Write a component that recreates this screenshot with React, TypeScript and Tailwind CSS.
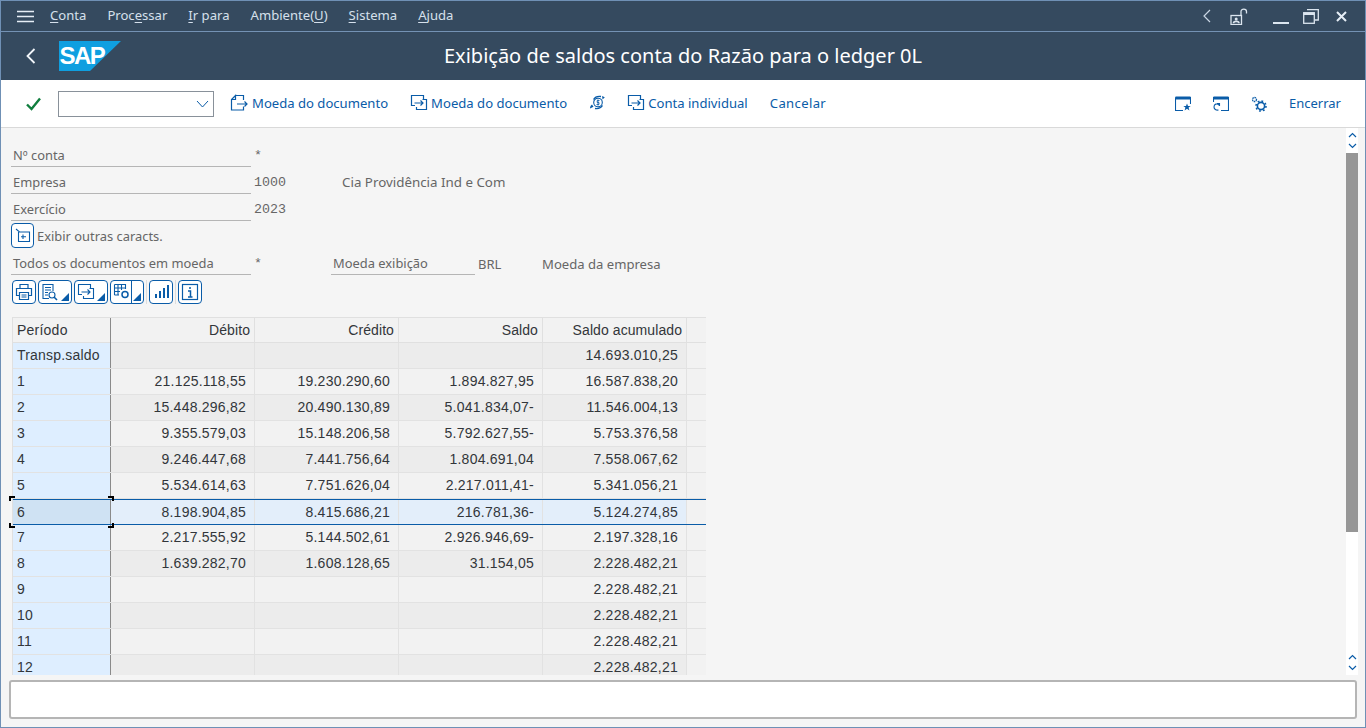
import React from "react";

const UI = "font-['Noto_Sans',sans-serif]";
const Blue = "#0a5ca8";

function Ico({ children, w = 18, h = 18, color = Blue, sw = 1.2 }: { children: React.ReactNode; w?: number; h?: number; color?: string; sw?: number }) {
  return (
    <svg width={w} height={h} viewBox={`0 0 ${w} ${h}`} fill="none" stroke={color} strokeWidth={sw} className="shrink-0">
      {children}
    </svg>
  );
}

function Menu({ pre, u, post }: { pre?: string; u: string; post?: string }) {
  return (
    <span className="text-[13.1px] text-[#d5e0ec] whitespace-nowrap">
      {pre}
      <span className="underline underline-offset-2">{u}</span>
      {post}
    </span>
  );
}

function ToolBtn({ icon, label, tight, cls }: { icon?: React.ReactNode; label?: string; tight?: boolean; cls?: string }) {
  return (
    <div className={`flex items-center ${tight ? "gap-[3px]" : "gap-[4px]"} text-[13.1px] text-[#0a5ca8] whitespace-nowrap`}>
      {icon}
      {label && <span className={`pt-[1px] ${cls ?? ""}`}>{label}</span>}
    </div>
  );
}

const ExportIcon = (
  <Ico w={18} h={18}>
    <path d="M5 11.5H1.5V1.5H13.5V5" />
    <path d="M6.5 13V15.5H16.5V5.5H12.5" />
    <path d="M4.5 9H13M10.5 6.5L13 9L10.5 11.5" />
  </Ico>
);
const DocIcon = (
  <Ico w={18} h={18}>
    <path d="M5.5 1.5H13.5V6M13.5 12.5V16H1.5V5.5L5.5 1.5V5.5H1.5" />
    <path d="M7 10H17M14.5 7.5L17 10L14.5 12.5" />
  </Ico>
);

function Field({ label, value, extra }: { label: string; value?: string; extra?: React.ReactNode }) {
  return (
    <div className="flex h-[27px] items-center">
      <div className="h-[27px] w-[240px] shrink-0 border-b border-[#b5b5b5] pl-[2px] pt-[6px] text-[12.9px] leading-[18px] text-[#666666] whitespace-nowrap">{label}</div>
      <div className="w-[91px] shrink-0 pl-[3px] pt-[5px] font-['Liberation_Mono',monospace] text-[13.33px] text-[#666666]">{value}</div>
      {extra}
    </div>
  );
}

function SmallBtn({ children, wide, split }: { children: React.ReactNode; wide?: boolean; split?: boolean }) {
  return (
    <div className={`${wide ? "w-[34px]" : "w-[24px]"} relative flex h-[24px] shrink-0 items-center justify-start rounded-[4px] border border-[#0a5ca8] bg-white pl-[2px]`}>
      {children}
      {split && <div className="absolute right-[11px] top-0 h-[22px] w-px bg-[#0a5ca8]" />}
      {wide && <div className="absolute bottom-[2px] right-[2px] h-0 w-0 border-b-[8px] border-l-[8px] border-b-[#0a5ca8] border-l-transparent" />}
    </div>
  );
}

const rows: [string, string, string, string, string][] = [
  ["Transp.saldo", "", "", "", "14.693.010,25"],
  ["1", "21.125.118,55", "19.230.290,60", "1.894.827,95", "16.587.838,20"],
  ["2", "15.448.296,82", "20.490.130,89", "5.041.834,07-", "11.546.004,13"],
  ["3", "9.355.579,03", "15.148.206,58", "5.792.627,55-", "5.753.376,58"],
  ["4", "9.246.447,68", "7.441.756,64", "1.804.691,04", "7.558.067,62"],
  ["5", "5.534.614,63", "7.751.626,04", "2.217.011,41-", "5.341.056,21"],
  ["6", "8.198.904,85", "8.415.686,21", "216.781,36-", "5.124.274,85"],
  ["7", "2.217.555,92", "5.144.502,61", "2.926.946,69-", "2.197.328,16"],
  ["8", "1.639.282,70", "1.608.128,65", "31.154,05", "2.228.482,21"],
  ["9", "", "", "", "2.228.482,21"],
  ["10", "", "", "", "2.228.482,21"],
  ["11", "", "", "", "2.228.482,21"],
  ["12", "", "", "", "2.228.482,21"],
];

function Corner({ cls }: { cls: string }) {
  return <div className={`absolute h-[5px] w-[6px] border-black ${cls}`} />;
}

function Table() {
  const cell = "w-[144px] shrink-0 border-r border-[#e2e2e2] pr-[8px] text-right tracking-[0.23px]";
  const cellH = "w-[144px] shrink-0 border-r border-[#e0e0e0] pr-[4px] text-right tracking-[0.08px]";
  return (
    <div className="ml-[1px] w-[694px] border-l border-t border-[#e0e0e0] font-['Liberation_Sans',sans-serif] text-[14px] text-[#32363a]">
      <div className="flex h-[25px] items-center border-b border-[#e0e0e0] bg-[#f2f2f2] leading-[25px]">
        <div className="w-[98px] shrink-0 border-r border-[#8a8a8a] pl-[4px] tracking-[0.23px]">Período</div>
        <div className={cellH}>Débito</div>
        <div className={cellH}>Crédito</div>
        <div className={cellH}>Saldo</div>
        <div className={cellH}>Saldo acumulado</div>
        <div className="flex-1" />
      </div>
      {rows.map((r, i) => {
        const sel = i === 6;
        const bg = sel ? "bg-[#e3eefa]" : i % 2 === 0 ? "bg-[#ececec]" : "bg-[#f2f2f2]";
        return (
          <div
            key={r[0]}
            className={`flex h-[26px] ${bg} ${sel ? "relative z-10 border-y border-[#0a5ca8] leading-[24px]" : "border-b border-[#e2e2e2] leading-[25px]"}`}
          >
            <div className={`relative w-[98px] shrink-0 border-r border-[#8a8a8a] pl-[4px] tracking-[0.2px] ${sel ? "bg-[#cfe2f3]" : "bg-[#deeeff]"}`}>
              {r[0]}
              {sel && (
                <>
                  <Corner cls="-left-[4px] -top-[4px] border-l-2 border-t-2" />
                  <Corner cls="-right-[4px] -top-[4px] border-r-2 border-t-2" />
                  <Corner cls="-bottom-[4px] -left-[4px] border-b-2 border-l-2" />
                  <Corner cls="-bottom-[4px] -right-[4px] border-b-2 border-r-2" />
                </>
              )}
            </div>
            <div className={cell}>{r[1]}</div>
            <div className={cell}>{r[2]}</div>
            <div className={cell}>{r[3]}</div>
            <div className={cell}>{r[4]}</div>
            <div className="flex-1 bg-[#f2f2f2]" />
          </div>
        );
      })}
    </div>
  );
}

export default function App() {
  return (
    <div className={`${UI} flex h-[728px] w-[1366px] flex-col overflow-hidden border border-[#6f90b5] bg-[#f5f5f5]`}>
      {/* Menu bar */}
      <div className="flex h-[31px] shrink-0 items-center border-b border-[#7492b4] bg-[#354a5f] pl-[16px] pr-[18px]">
        <svg width="17" height="13" viewBox="0 0 17 13" className="mr-[16px] shrink-0" stroke="#e6eef6" strokeWidth="1.6">
          <path d="M0 1.5H17M0 6.5H17M0 11.5H17" />
        </svg>
        <div className="flex items-center gap-[21px]">
          <Menu u="C" post="onta" />
          <Menu pre="Proc" u="e" post="ssar" />
          <Menu u="I" post="r para" />
          <span className="text-[13.1px] text-[#d5e0ec] whitespace-nowrap">
            Ambiente(<span className="underline underline-offset-2">U</span>)
          </span>
          <Menu u="S" post="istema" />
          <Menu u="A" post="juda" />
        </div>
        <div className="ml-auto flex items-center">
          <svg width="9" height="14" viewBox="0 0 9 14" fill="none" stroke="#c9d6e4" strokeWidth="1.2" className="mr-[19px]">
            <path d="M8 1L2 7L8 13" />
          </svg>
          <svg width="18" height="17" viewBox="0 0 18 17" fill="none" stroke="#dbe5ef" strokeWidth="1.3" className="mr-[25px]">
            <path d="M11 8V3.5C11 0.4 16.5 0.4 16.5 3.5V5.5" />
            <rect x="1" y="7.5" width="10.5" height="9" />
            <circle cx="6.2" cy="11" r="1.5" fill="#dbe5ef" stroke="none" />
            <path d="M3.5 15.2C3.5 12.8 9 12.8 9 15.2" strokeWidth="1.6" />
          </svg>
          <div className="mr-[14px] mt-[13px] h-[2px] w-[16px] bg-[#dbe5ef]" />
          <svg width="16" height="16" viewBox="0 0 16 16" fill="none" stroke="#dbe5ef" strokeWidth="1.3" className="mr-[17px]">
            <rect x="0.7" y="4.7" width="10.6" height="10.6" />
            <path d="M0.7 6H11.3" strokeWidth="2" />
            <path d="M4 1.7H15.3V12H12" />
          </svg>
          <svg width="11" height="11" viewBox="0 0 11 11" fill="none" stroke="#e6eef6" strokeWidth="2">
            <path d="M1 1L10 10M10 1L1 10" />
          </svg>
        </div>
      </div>

      {/* Title bar */}
      <div className="flex h-[48px] shrink-0 items-center bg-[#354a5f] pl-[25px]">
        <svg width="10" height="16" viewBox="0 0 10 16" fill="none" stroke="#f2f6fa" strokeWidth="1.8" className="shrink-0">
          <path d="M8.5 1L1.5 8L8.5 15" />
        </svg>
        <svg width="62" height="30" viewBox="0 0 62 30" className="ml-[23px] shrink-0">
          <path d="M0 0H62L31 30H0Z" fill="#0f9fe0" />
          <text x="0.5" y="23" fontFamily="Liberation Sans, sans-serif" fontWeight="700" fontSize="24" fill="#ffffff" letterSpacing="-1.6">SAP</text>
        </svg>
        <div className="flex-1 pr-[120px] text-center text-[20px] text-white whitespace-nowrap">
          Exibição de saldos conta do Razão para o ledger 0L
        </div>
      </div>

      {/* Toolbar */}
      <div className="flex h-[48px] shrink-0 items-center border-b border-[#d9d9d9] bg-white pl-[25px] pr-[24px]">
        <svg width="15" height="14" viewBox="0 0 15 14" fill="none" stroke="#107e3e" strokeWidth="2.4" className="shrink-0">
          <path d="M1 7.5L5.5 12L14 1.5" />
        </svg>
        <div className="ml-[17px] flex h-[26px] w-[156px] shrink-0 items-center justify-end border border-[#89919a] pr-[4px]">
          <svg width="13" height="8" viewBox="0 0 13 8" fill="none" stroke="#0a5ca8" strokeWidth="1">
            <path d="M1 1L6.5 7L12 1" />
          </svg>
        </div>
        <div className="ml-[16px] flex items-center">
          <ToolBtn icon={DocIcon} label="Moeda do documento" />
          <div className="w-[22px]" />
          <ToolBtn icon={ExportIcon} label="Moeda do documento" tight />
          <div className="w-[22px]" />
          <svg width="17" height="16" viewBox="0 0 17 16" fill="none" stroke={Blue} strokeWidth="1.1" className="shrink-0">
            <circle cx="9" cy="7.5" r="4.3" />
            <path d="M4.5 4.5C6 2 9 1 12 1.5" strokeWidth="1.3" />
            <path d="M13.5 10.5C12 13 9 14 6 13.5" strokeWidth="1.3" />
            <path d="M13 1L15.8 2.2L13.6 4.6Z" fill={Blue} stroke="none" />
            <path d="M1 13.5C1 11.8 1.8 10.2 3 9.5L4.5 11.8Z" fill={Blue} stroke="none" />
            <path d="M10.5 5.5H8.2V7.5H10V9.5H7.5M9 4.4V10.6" strokeWidth="0.8" />
          </svg>
          <div className="w-[21px]" />
          <ToolBtn icon={ExportIcon} label="Conta individual" tight />
          <div className="w-[22px]" />
          <ToolBtn label="Cancelar" cls="tracking-[0.35px]" />
        </div>
        <div className="ml-auto flex items-center">
          <svg width="16" height="15" viewBox="0 0 16 15" fill="none" stroke={Blue} strokeWidth="1.1" className="mr-[22px]">
            <path d="M0.5 1.5H15.5V8M8 14.5H0.5V1.5" />
            <path d="M0.5 2H15.5" strokeWidth="3" />
            <path d="M12 7.5L13 10H15.7L13.6 11.6L14.4 14.5L12 12.8L9.6 14.5L10.4 11.6L8.3 10H11Z" fill={Blue} stroke="none" />
          </svg>
          <svg width="16" height="15" viewBox="0 0 16 15" fill="none" stroke={Blue} strokeWidth="1.1" className="mr-[22px]">
            <path d="M0.5 6V1.5H15.5V14.5H8" />
            <path d="M0.5 2H15.5" strokeWidth="3" />
            <path d="M6 9C4 7 1 8 1 11C1 13 3 14.5 5.5 14M4 7.5H6.5V10" />
          </svg>
          <svg width="16" height="16" viewBox="0 0 16 16" fill="none" stroke={Blue} className="mr-[22px]">
            <circle cx="3.5" cy="3.5" r="2" strokeWidth="1.3" strokeDasharray="1.5 0.6" />
            <circle cx="10" cy="10" r="3.6" strokeWidth="1.6" />
            <circle cx="10" cy="10" r="5" strokeWidth="1.6" strokeDasharray="1.8 2.1" />
          </svg>
          <span className="pt-[1px] text-[13px] text-[#0a5ca8]">Encerrar</span>
        </div>
      </div>

      {/* Content */}
      <div className="flex h-[547px] min-h-0 shrink-0 overflow-hidden">
        <div className="min-w-0 flex-1 pl-[10px] pt-[12px]">
          <Field label="Nº conta" value="*" />
          <Field label="Empresa" value="1000" extra={<span className="pt-[4px] text-[13.35px] text-[#666666]">Cia Providência Ind e Com</span>} />
          <Field label="Exercício" value="2023" />
          <div className="flex h-[27px] items-center pt-[2px]">
            <div className="flex h-[25px] w-[23px] items-center justify-center rounded-[4px] border border-[#0a5ca8] bg-white">
              <svg width="16" height="15" viewBox="0 0 16 15" fill="none" stroke={Blue} strokeWidth="1.1">
                <path d="M1 1L4.5 4H14.5V13.5H3.5V4M8 6.5V11M6 8.8H11" />
              </svg>
            </div>
            <span className="ml-[3px] pt-[3px] text-[12.9px] text-[#666666]">Exibir outras caracts.</span>
          </div>
          <div className="flex h-[27px] items-center">
            <div className="h-[27px] w-[240px] shrink-0 border-b border-[#b5b5b5] pl-[2px] pt-[6px] text-[12.9px] leading-[18px] text-[#666666] whitespace-nowrap">Todos os documentos em moeda</div>
            <div className="w-[80px] shrink-0 pl-[3px] pt-[4px] font-['Liberation_Mono',monospace] text-[13.33px] text-[#666666]">*</div>
            <div className="h-[27px] w-[144px] shrink-0 border-b border-[#b5b5b5] pl-[2px] pt-[6px] text-[12.9px] leading-[18px] text-[#666666] whitespace-nowrap">Moeda exibição</div>
            <div className="w-[67px] shrink-0 pl-[3px] pt-[6px] text-[13px] text-[#666666]">BRL</div>
            <span className="pt-[6px] text-[13.1px] text-[#666666]">Moeda da empresa</span>
          </div>
          <div className="ml-[1px] mt-[5px] flex h-[24px] items-center">
            <SmallBtn>
              <svg width="18" height="18" viewBox="0 0 18 18" fill="none" stroke={Blue} strokeWidth="1.2">
                <path d="M5 5V1.5H13V5M4.5 12.5H1.5V5.5H16.5V12.5H13.5M4.5 9.5H13.5V16.5H4.5ZM6.5 12H11.5M6.5 14H11.5" />
              </svg>
            </SmallBtn>
            <div className="w-[2px]" />
            <SmallBtn wide>
              <svg width="18" height="18" viewBox="0 0 18 18" fill="none" stroke={Blue} strokeWidth="1.1">
                <path d="M8 15.5H2V1.5H12V8M4 4.5H10M4 7H10M4 9.5H7M4 12H7" />
                <circle cx="11" cy="12" r="3" />
                <path d="M13 14L16 17" strokeWidth="1.6" />
              </svg>
            </SmallBtn>
            <div className="w-[2px]" />
            <SmallBtn wide>
              <svg width="18" height="18" viewBox="0 0 18 18" fill="none" stroke={Blue} strokeWidth="1.1">
                <path d="M5 11.5H1.5V1.5H13.5V5" />
                <path d="M6.5 13V15.5H16.5V5.5H12.5" />
                <path d="M4.5 9H13M10.5 6.5L13 9L10.5 11.5" />
              </svg>
            </SmallBtn>
            <div className="w-[2px]" />
            <SmallBtn wide split>
              <svg width="18" height="18" viewBox="0 0 18 18" fill="none" stroke={Blue} strokeWidth="1.1">
                <path d="M1.5 1.5H12.5V6M1.5 5H12.5M1.5 8.5H7M1.5 12H6M1.5 1.5V12M5 1.5V12M8.5 1.5V7" />
                <circle cx="12" cy="11.5" r="3" strokeWidth="1.5" />
              </svg>
            </SmallBtn>
            <div className="ml-[2px] mr-[2px] h-[24px] w-px bg-[#dddddd]" />
            <SmallBtn>
              <svg width="18" height="18" viewBox="0 0 18 18" fill={Blue}>
                <rect x="3" y="11" width="2" height="4" />
                <rect x="7" y="8" width="2" height="7" />
                <rect x="11" y="5" width="2" height="10" />
                <rect x="15" y="2" width="2" height="13" />
              </svg>
            </SmallBtn>
            <div className="ml-[2px] mr-[2px] h-[24px] w-px bg-[#dddddd]" />
            <SmallBtn>
              <svg width="18" height="18" viewBox="0 0 18 18" fill="none" stroke={Blue}>
                <rect x="1.5" y="1.5" width="15" height="15" strokeWidth="1.2" />
                <path d="M9 4V6M7 8H9.5V14M7 14H11.5" strokeWidth="1.5" />
              </svg>
            </SmallBtn>
          </div>
          <div className="mt-[13px]">
            <Table />
          </div>
        </div>
        <div className="mr-[7px] flex h-[547px] w-[12px] shrink-0 flex-col items-center bg-white">
          <svg width="9" height="6" viewBox="0 0 9 6" fill="none" stroke={Blue} strokeWidth="1.2" className="mt-[4px]"><path d="M1 5L4.5 1.5L8 5" /></svg>
          <svg width="9" height="6" viewBox="0 0 9 6" fill="none" stroke={Blue} strokeWidth="1.2" className="mt-[5px]"><path d="M1 1L4.5 4.5L8 1" /></svg>
          <div className="mt-[4px] h-[379px] w-full shrink-0 bg-[#969696]" />
          <svg width="9" height="6" viewBox="0 0 9 6" fill="none" stroke={Blue} strokeWidth="1.2" className="mt-auto"><path d="M1 5L4.5 1.5L8 5" /></svg>
          <svg width="9" height="6" viewBox="0 0 9 6" fill="none" stroke={Blue} strokeWidth="1.2" className="mb-[4px] mt-[5px]"><path d="M1 1L4.5 4.5L8 1" /></svg>
        </div>
      </div>

      {/* Status */}
      <div className="flex-1 px-[8px] pt-[5px]">
        <div className="h-[39px] rounded-[3px] border-2 border-[#b5b5b5] bg-white" />
      </div>
    </div>
  );
}
